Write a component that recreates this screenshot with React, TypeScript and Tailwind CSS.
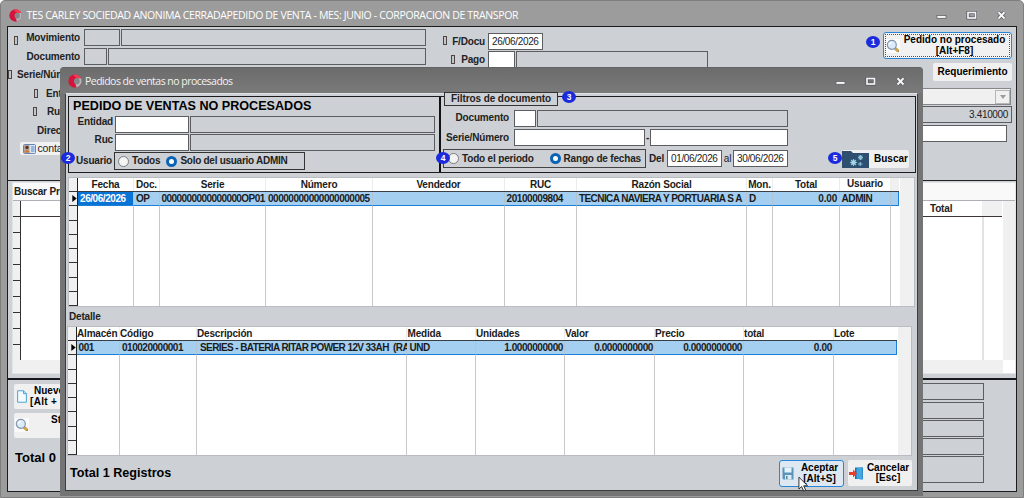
import type { ReactNode } from "react";

function Logo({ className }: { className: string }) {
  return (
    <svg viewBox="0 0 14 14" className={className}>
      <circle cx="7" cy="7" r="6.600" fill="#d6123a" />
      <path d="M7 .4a6.600 6.600 0 0 1 6 3.900L9 4.500 5 1z" fill="#ef3d55" />
      <path d="M13 4.300a6.600 6.600 0 0 1-4.500 9.100L7.500 10l3-5.700z" fill="#b4b6ba" />
      <ellipse cx="8.800" cy="7.200" rx="2.900" ry="3.100" fill="#85868a" />
    </svg>
  );
}

function WindowControls({ className }: { className: string }) {
  return (
    <svg viewBox="0 0 74 12" className={className}>
      <rect x="2" y="5.500" width="9" height="2.800" fill="#f4f4f4" stroke="#55585f" strokeWidth=".7" />
      <rect x="33" y="2.500" width="7.500" height="5.500" fill="none" stroke="#4f535c" strokeWidth="3" />
      <rect x="33" y="2.500" width="7.500" height="5.500" fill="none" stroke="#f4f4f4" strokeWidth="1.700" />
      <path d="M63.500 2.200l6 6.300M69.500 2.200l-6 6.300" stroke="#50545d" strokeWidth="3.400" />
      <path d="M63.500 2.200l6 6.300M69.500 2.200l-6 6.300" stroke="#f6f6f6" strokeWidth="2" />
    </svg>
  );
}

function Magnifier({ className }: { className: string }) {
  return (
    <svg viewBox="0 0 14 14" className={className}>
      <rect width="14" height="14" fill="#fbfbfc" />
      <path d="M8.500 8.800l3.300 3" stroke="#8a7a4a" strokeWidth="2.800" strokeLinecap="round" />
      <path d="M9.800 9.900l2 1.800" stroke="#e0aa36" strokeWidth="2" strokeLinecap="round" />
      <circle cx="5.800" cy="5.800" r="4.500" fill="#dcebfa" stroke="#8494ab" strokeWidth="1.200" />
      <path d="M3.500 5.500a2.500 2.500 0 0 1 2.400-2.200" stroke="#fff" strokeWidth="1.200" fill="none" />
    </svg>
  );
}

function Box({ className, children }: { className: string; children?: ReactNode }) {
  return <div className={`box-border h-[17px] shrink-0 border border-[#5b5d61] ${className}`}>{children}</div>;
}

function Tofu({ className }: { className: string }) {
  return <span className={`h-[9px] w-[4px] shrink-0 border border-[#50443f] bg-[#bfc6d0] ${className}`} />;
}

function Radio({ on = false, className }: { on?: boolean; className: string }) {
  return on ? (
    <span className={`size-[11px] shrink-0 rounded-full border-[3.500px] border-[#0a63b5] bg-white ${className}`} />
  ) : (
    <span className={`size-[11px] shrink-0 rounded-full border border-[#7b7d80] bg-[#f3f3f3] ${className}`} />
  );
}

function Callout({ n, className }: { n: number; className: string }) {
  return (
    <span className={`absolute flex h-[12px] w-[14px] items-center justify-center rounded-[50%] bg-[#1b2bdc] text-[8.500px] leading-none font-bold text-white ${className}`}>
      {n}
    </span>
  );
}

type Column = {
  title: string;
  value: string;
  width: string;
  head: string;
  cell: string;
};

const orderColumns: Column[] = [
  { title: "Fecha", value: "26/06/2026", width: "w-[56px]", head: "justify-center", cell: "pl-[2px] tracking-[-0.430px] bg-[#0a74d6] text-white" },
  { title: "Doc.", value: "OP", width: "w-[26px]", head: "justify-center", cell: "pl-[2px] tracking-[-0.430px] bg-[#a4cff0]" },
  { title: "Serie", value: "0000000000000000OP01", width: "w-[106px]", head: "justify-center", cell: "pl-[1.500px] tracking-[-0.570px] bg-[#a4cff0]" },
  { title: "Número", value: "00000000000000000005", width: "w-[107px]", head: "justify-center", cell: "pl-[2px] tracking-[-0.480px] bg-[#a4cff0]" },
  { title: "Vendedor", value: "", width: "w-[132px]", head: "justify-center", cell: "bg-[#a4cff0]" },
  { title: "RUC", value: "20100009804", width: "w-[72px]", head: "justify-center", cell: "pl-[1.500px] tracking-[-0.430px] bg-[#a4cff0]" },
  { title: "Razón Social", value: "TECNICA NAVIERA Y PORTUARIA S A", width: "w-[170px]", head: "justify-center", cell: "pl-[2px] tracking-[-0.580px] word-spacing-[1px] bg-[#a4cff0]" },
  { title: "Mon.", value: "D", width: "w-[26px]", head: "justify-center", cell: "pl-[2px] bg-[#a4cff0]" },
  { title: "Total", value: "0.00", width: "w-[67px]", head: "justify-center", cell: "justify-end pr-[2px] tracking-[-0.200px] bg-[#a4cff0]" },
  { title: "Usuario", value: "ADMIN", width: "w-[51px]", head: "justify-center pb-[2px]", cell: "pl-[1.500px] tracking-[-0.400px] bg-[#a4cff0]" },
  { title: "", value: "", width: "w-[8px]", head: "bg-[#f0f0f0]", cell: "border-r border-r-[#1b7fd8] bg-[#a4cff0]" },
];

const detailColumns: Column[] = [
  { title: "Almacén", value: "001", width: "w-[43px]", head: "", cell: "pl-[1.500px] tracking-[-0.430px] bg-[#a4cff0]" },
  { title: "Código", value: "010020000001", width: "w-[77px]", head: "", cell: "pl-[2px] tracking-[-0.480px] bg-[#a4cff0]" },
  { title: "Descripción", value: "SERIES - BATERIA RITAR POWER 12V 33AH  (RA", width: "w-[210px]", head: "", cell: "pl-[3px] tracking-[-0.600px] bg-[#a4cff0]" },
  { title: "Medida", value: "UND", width: "w-[69px]", head: "pl-[0.500px]", cell: "pl-[2.500px] tracking-[-0.500px] bg-[#a4cff0]" },
  { title: "Unidades", value: "1.0000000000", width: "w-[89px]", head: "", cell: "justify-end pr-[1px] tracking-[-0.430px] bg-[#a4cff0]" },
  { title: "Valor", value: "0.0000000000", width: "w-[90px]", head: "", cell: "justify-end pr-[1px] tracking-[-0.430px] bg-[#a4cff0]" },
  { title: "Precio", value: "0.0000000000", width: "w-[89px]", head: "", cell: "justify-end pr-[1px] tracking-[-0.430px] bg-[#a4cff0]" },
  { title: "total", value: "0.00", width: "w-[90px]", head: "", cell: "justify-end pr-[1px] tracking-[-0.300px] bg-[#a4cff0]" },
  { title: "Lote", value: "", width: "w-[63px]", head: "", cell: "border-r border-r-[#1b7fd8] bg-[#a4cff0]" },
];

function Grid({ columns, className }: { columns: Column[]; className: string }) {
  return (
    <div className={`flex shrink-0 overflow-hidden border border-[#b9bdc1] bg-white text-[10px] leading-none font-bold text-[#1b1b1b] ${className}`}>
      <div className="flex w-[9px] shrink-0 flex-col border-r border-[#222]">
        <div className="h-[14px] shrink-0 border-b border-[#333] bg-[#f0f0f0]" />
        {[0, 1, 2, 3, 4, 5, 6, 7].map((row) => (
          <div key={row} className="flex flex-1 items-center justify-end border-b border-[#333] bg-[#f0f0f0]">
            {row === 0 && (
              <svg viewBox="0 0 5 8" className="h-[7px] w-[5px]">
                <path d="M0 0l5 4-5 4z" fill="#000" />
              </svg>
            )}
          </div>
        ))}
      </div>
      {columns.map((c, i) => (
        <div key={i} className={`flex shrink-0 flex-col ${c.width}`}>
          <div className={`flex h-[13px] shrink-0 items-center tracking-[-0.180px] whitespace-pre ${c.head} ${i < columns.length - 1 ? "border-r border-r-[#ececec]" : ""}`}>{c.title}</div>
          <div className="h-px shrink-0 bg-[#3a3f45]" />
          <div className={`flex h-[14px] shrink-0 items-center border-b border-b-[#1b7fd8] whitespace-pre ${i < columns.length - 1 ? "border-r border-r-[#b4c4d0]" : ""} ${c.cell}`}>
            {c.value}
          </div>
          <div className={`flex-1 ${i < columns.length - 1 ? "border-r border-[#c9c9c9]" : ""}`} />
        </div>
      ))}
      <div className="ml-px flex-1 bg-[#f0f0f0]" />
    </div>
  );
}

function MainTop() {
  return (
    <div className="flex h-[153px] shrink-0 text-[10px] leading-none font-bold tracking-[-0.170px] text-[#222]">
      <div className="flex w-[419px] shrink-0 flex-col pt-[2px]">
        <div className="flex h-[17px] items-center">
          <Tofu className="mt-[5px] ml-[6px]" />
          <span className="w-[62px] text-right">Movimiento</span>
          <Box className="ml-[4px] w-[36px]" />
          <Box className="ml-[1px] w-[305px]" />
        </div>
        <div className="mt-[2px] flex h-[17px] items-center">
          <span className="w-[72px] text-right">Documento</span>
          <Box className="ml-[4px] w-[23px]" />
          <Box className="ml-[1px] w-[318px]" />
        </div>
        <div className="mt-[1px] flex h-[17px] items-center">
          <Tofu className="" />
          <span className="ml-[5px]">Serie/Número</span>
        </div>
        <div className="mt-[2px] flex h-[17px] items-center">
          <Tofu className="ml-[26px]" />
          <span className="ml-[8px]">Entidad</span>
        </div>
        <div className="mt-[1px] flex h-[17px] items-center">
          <Tofu className="ml-[25px]" />
          <span className="ml-[10px]">Ruc</span>
        </div>
        <div className="mt-[2px] flex h-[17px] items-center pl-[29px]">Dirección</div>
        <div className="mt-[3px] ml-[12px] flex h-[13px] w-[60px] items-center rounded-[2px] bg-[#f1f1f2] pl-[3px] font-normal">
          <svg viewBox="0 0 13 10" className="h-[10px] w-[13px]">
            <rect x=".5" y=".5" width="12" height="9" rx="1" fill="#d9e8f8" stroke="#6586b5" />
            <path d="M1 1h5.500v8H1z" fill="#b3a59b" />
            <circle cx="4" cy="3.500" r="1.700" fill="#5e3320" />
            <path d="M1.500 8.500c0-3 5-3 5 0z" fill="#d4752c" />
            <path d="M8 3h3.500M8 5h3.500M8 7h3.500" stroke="#4f83c4" />
          </svg>
          <span className="ml-[1.500px] text-[10.500px]">contacto</span>
        </div>
      </div>
      <div className="flex w-[420px] shrink-0 flex-col pt-[6px]">
        <div className="flex h-[17px] items-center">
          <Tofu className="mt-[-3px] ml-[16px]" />
          <span className="w-[38px] text-right">F/Docu</span>
          <Box className="ml-[3px] flex w-[55px] items-center bg-white pl-[3px] font-normal tracking-[-0.350px]">26/06/2026</Box>
        </div>
        <div className="mt-[1px] flex h-[17px] items-center">
          <Tofu className="ml-[24px]" />
          <span className="w-[30px] text-right">Pago</span>
          <Box className="ml-[3px] w-[27px] bg-white" />
          <Box className="ml-[1px] w-[192px]" />
        </div>
      </div>
      <div className="ml-[36px] flex w-[129px] shrink-0 flex-col items-end pt-[5px] tracking-normal">
        <div className="h-[27px] w-[129px] rounded-[3px] border border-[#2a86d4] bg-[#f1f1f1] p-px">
          <div className="flex h-full w-full items-center border border-dotted border-[#555]">
            <Magnifier className="size-[14px] shrink-0" />
            <div className="flex-1 text-center leading-[10.500px] whitespace-nowrap text-black">
              Pedido no procesado
              <br />
              [Alt+F8]
            </div>
          </div>
        </div>
        <div className="mt-[4px] flex h-[18px] w-[79px] items-center justify-center rounded-[2px] bg-[#f0f0f1] text-black">Requerimiento</div>
        <div className="mt-[7px] mr-[1px] flex h-[17px] w-[120px] items-center justify-end border border-[#85878a] bg-[#f0f0f0]">
          <div className="flex h-[14px] w-[15px] items-center justify-center border border-[#b5b5b5]">
            <svg viewBox="0 0 6 4" className="h-[4px] w-[6px]">
              <path d="M0 0h6L3 4z" fill="#9b9b9b" />
            </svg>
          </div>
        </div>
        <Box className="mt-[1px] flex w-[120px] items-center justify-end pr-[3px] font-normal tracking-[-0.350px]">3.410000</Box>
        <Box className="mt-[2px] mr-[5px] w-[120px] bg-white" />
      </div>
    </div>
  );
}

function MainGrid() {
  return (
    <div className="mt-px ml-[4px] flex h-[192px] shrink-0 flex-col border border-[#e2e4e6] bg-white text-[10px] leading-none font-bold tracking-[-0.180px] text-[#222]">
      <div className="flex h-[18px] shrink-0 items-center border-b border-[#adb0b4] bg-[#f9f9f9] pl-[1px]">Buscar Producto</div>
      <div className="flex flex-1">
        <div className="flex w-[8px] flex-col border-r border-[#333]">
          {[0, 1, 2, 3, 4, 5, 6, 7, 8].map((row) => (
            <div key={row} className="h-[16px] shrink-0 border-b border-[#333] bg-[#f0f0f0]" />
          ))}
          <div className="flex-1 bg-[#f0f0f0]" />
        </div>
        <div className="flex w-[981px] flex-col">
          <div className="flex h-[16px] shrink-0 items-center border-b border-[#3d343a]">
            <span className="ml-[909px] w-[52px]">Total</span>
            <span className="h-full flex-1 bg-[#f0f0f0]" />
          </div>
          <div className="ml-[880px] w-[83px] flex-1 border-r-2 border-[#e2e2e2]" />
        </div>
        <div className="ml-px flex-1 bg-[#f0f0f0]" />
      </div>
      <div className="flex h-[13px] shrink-0">
        <div className="w-[990px] bg-[#f0f0f0]" />
      </div>
    </div>
  );
}

function MainBottom() {
  return (
    <div className="flex flex-1 justify-between text-[10px] leading-none font-bold text-black">
      <div className="flex w-[80px] flex-col pt-[4px] pl-[6px]">
        <div className="flex h-[25px] items-center rounded-[2px] bg-[#f0f0f1]">
          <svg viewBox="0 0 11 14" className="ml-[3px] h-[15px] w-[10px] shrink-0">
            <path d="M.7.7h6.500l3.100 3.200v9.400H.7z" fill="#f3fbff" stroke="#3c9ad0" />
            <path d="M7.200.7v3.200h3.100" fill="#b9e3f7" stroke="#3c9ad0" />
          </svg>
          <div className="ml-[3px] w-[60px] leading-[10.500px] whitespace-nowrap">
            <div className="pl-[4px]">Nuevo</div>
            <div className="tracking-[0.300px]">[Alt + N]</div>
          </div>
        </div>
        <div className="mt-[4px] flex h-[25px] rounded-[2px] bg-[#f0f0f1]">
          <Magnifier className="mt-[5px] ml-[1px] size-[14px] shrink-0" />
          <span className="mt-[2px] ml-[22px]">Stock</span>
        </div>
        <div className="mt-[13px] pl-[1px] text-[13px] whitespace-nowrap">Total 0</div>
      </div>
      <div className="mr-[32px] flex w-[70px] flex-col pt-[3px]">
        <Box className="w-full" />
        <Box className="mt-[2px] w-full" />
        <Box className="mt-[1px] w-full" />
        <Box className="mt-[1px] w-full" />
        <div className="mt-[1px] h-[27px] border border-[#5b5d61]" />
      </div>
    </div>
  );
}

function Dialog() {
  return (
    <div className="absolute top-[67px] left-[60px] flex h-[429px] w-[863px] flex-col rounded-t-[4px] border-t border-[#626262] bg-[#747474]">
      <div className="flex h-[25px] shrink-0 items-center rounded-t-[4px] bg-linear-to-b from-[#6c6c6c] to-[#7a7a7a]">
        <Logo className="ml-[8px] size-[14px]" />
        <span className="mt-[2px] ml-[3px] font-['Open_Sans','Noto_Sans',sans-serif] text-[10.500px] leading-none tracking-[-0.520px] whitespace-nowrap text-[#f2f2f2]">Pedidos de ventas no procesados</span>
        <WindowControls className="mt-[3px] mr-[15px] ml-auto h-[12px] w-[74px]" />
      </div>
      <div className="mx-[5px] flex h-[398px] flex-col border border-[#3c3c3c] border-t-[#dfe2e4] bg-[#cdd0d5] pl-[2px]">
        <div className="mt-[2px] flex h-[77px] w-[848px] shrink-0 border border-[#1c1c1c] text-[10px] leading-none font-bold tracking-[-0.170px] text-[#222]">
          <div className="flex w-[372px] shrink-0 flex-col border-r-2 border-[#111] pl-[4px]">
            <div className="h-[19px] pt-[3px] text-[12.600px] tracking-normal whitespace-nowrap text-black">PEDIDO DE VENTAS NO PROCESADOS</div>
            <div className="flex h-[17px]">
              <span className="mt-px w-[40px] text-right">Entidad</span>
              <Box className="ml-[2px] w-[74px] bg-white" />
              <Box className="ml-[1px] w-[245px]" />
            </div>
            <div className="mt-[1px] flex h-[17px]">
              <span className="mt-px w-[40px] text-right">Ruc</span>
              <Box className="ml-[2px] w-[74px] bg-white" />
              <Box className="ml-[1px] w-[245px]" />
            </div>
            <div className="mt-[1px] flex h-[18px]">
              <span className="mt-[4px] w-[39px] text-right">Usuario</span>
              <div className="ml-[2px] flex w-[191px] items-center border border-[#333]">
                <Radio className="ml-[3px]" />
                <span className="ml-[3px]">Todos</span>
                <Radio on className="ml-[6px]" />
                <span className="ml-[3px] tracking-[-0.270px] whitespace-nowrap">Solo del usuario ADMIN</span>
              </div>
            </div>
          </div>
          <div className="relative flex flex-1 flex-col pt-[13px]">
            <div className="absolute top-[-5px] left-[3px] flex h-[14px] w-[114px] items-center justify-center border border-[#333] bg-[#cdd0d5] tracking-[-0.080px] whitespace-nowrap">Filtros de documento</div>
            <div className="flex h-[17px]">
              <span className="mt-[3px] w-[68px] text-right">Documento</span>
              <Box className="ml-[5px] w-[22px] bg-white" />
              <Box className="ml-[1px] w-[251px]" />
            </div>
            <div className="mt-[2px] flex h-[17px]">
              <span className="mt-[4px] w-[68px] text-right">Serie/Número</span>
              <Box className="ml-[5px] w-[131px] bg-white" />
              <span className="mt-[4px] w-[5px] text-center">-</span>
              <Box className="w-[138px] bg-white" />
            </div>
            <div className="mt-[3px] flex h-[19px] items-center">
              <div className="ml-[2px] flex h-[19px] w-[203px] items-center border border-[#444] whitespace-nowrap">
                <Radio className="ml-[4px]" />
                <span className="ml-[3px]">Todo el periodo</span>
                <Radio on className="ml-auto" />
                <span className="mr-[4px] ml-[3px]">Rango de fechas</span>
              </div>
              <span className="ml-[3px] w-[18px]">Del</span>
              <Box className="flex w-[55px] items-center bg-white pl-[3px] font-normal tracking-[-0.350px]">01/06/2026</Box>
              <span className="w-[11px] text-center font-normal">al</span>
              <Box className="flex w-[55px] items-center bg-white pl-[3px] font-normal tracking-[-0.350px]">30/06/2026</Box>
              <div className="ml-[54px] flex h-[18px] w-[67px] items-center rounded-[2px] bg-[#f0f0f1] tracking-normal text-black">
                <svg viewBox="0 0 27 18" className="h-[18px] w-[27px] shrink-0">
                  <path d="M0 1h9l2 2h16v15H0z" fill="#2e4f70" />
                  <g stroke="#8cc5dc" strokeWidth="1.100">
                    <path d="M8 12.500h7M11.500 9v7M9 10l5 5M14 10l-5 5" />
                    <path d="M16 7.500h5M18.500 5v5M16.700 5.700l3.600 3.600M20.300 5.700l-3.600 3.600" />
                    <path d="M16 14h4.500M18.200 12v4" />
                  </g>
                  <circle cx="11.500" cy="12.500" r="2.200" fill="#a6d8e8" />
                  <circle cx="18.500" cy="7.500" r="1.600" fill="#86bfd6" />
                </svg>
                <span className="ml-[5px]">Buscar</span>
              </div>
            </div>
          </div>
        </div>
        <Grid columns={orderColumns} className="mt-[4px] h-[130px] w-[847px]" />
        <div className="flex h-[19px] shrink-0 items-center pl-[1px] text-[10px] leading-none font-bold tracking-[-0.170px] text-[#222]">Detalle</div>
        <Grid columns={detailColumns} className="ml-[-1px] h-[130px] w-[845px]" />
        <div className="flex h-[35px] shrink-0 pl-[2px] text-[10px] leading-[10.500px] font-bold text-black">
          <span className="mt-[11px] w-[709px] text-[12.600px] leading-none">Total 1 Registros</span>
          <div className="mt-[4px] flex h-[27px] w-[65px] items-center rounded-[3px] border border-[#2a86d4] bg-[#dde8f3]">
            <svg viewBox="0 0 12 13" className="ml-[2px] h-[13px] w-[12px] shrink-0">
              <path d="M.5.5h11v12H1.500l-1-1z" fill="#5c93b8" />
              <path d="M2.500.5h7v5h-7z" fill="#e4f2fa" />
              <path d="M3 8h6.500v4.500H3z" fill="#dcebf4" />
              <path d="M4 9h1.500v3H4z" fill="#4d82a8" />
            </svg>
            <div className="flex-1 pl-[2px] text-center whitespace-nowrap">
              Aceptar
              <br />
              [Alt+S]
            </div>
          </div>
          <div className="mt-[4px] ml-[4px] flex h-[26px] w-[64px] items-center rounded-[2px] bg-[#f0f0f1]">
            <svg viewBox="0 0 15 15" className="ml-[1px] h-[15px] w-[15px] shrink-0">
              <path d="M6 1.500h8v11.500H6z" fill="#1f6fae" />
              <path d="M7.500 2.500l6-1.500v13l-6-1.500z" fill="#43a7e2" />
              <path d="M0 6h4V3.500l4 4-4 4V9H0z" fill="#e5402c" />
            </svg>
            <div className="flex-1 text-center whitespace-nowrap">
              Cancelar
              <br />
              [Esc]
            </div>
          </div>
        </div>
      </div>
    </div>
  );
}

export default function App() {
  return (
    <div className="h-[498px] w-[1024px] overflow-hidden bg-white font-['Liberation_Sans',Arial,sans-serif]">
      <div className="relative flex h-full w-full flex-col rounded-t-[5px] border border-[#7e7e7e] bg-[#9c9c9c] px-[6px] pb-[5px]">
        <div className="flex h-[25px] shrink-0 items-center">
          <Logo className="mt-[3px] ml-[2px] size-[13px]" />
          <span className="mt-[3px] ml-[4.500px] font-['Open_Sans','Noto_Sans',sans-serif] text-[10.500px] leading-none tracking-[-0.350px] whitespace-nowrap text-white">
            TES CARLEY SOCIEDAD ANONIMA CERRADAPEDIDO DE VENTA - MES: JUNIO - CORPORACION DE TRANSPOR
          </span>
          <WindowControls className="mt-[5px] mr-[8px] ml-auto h-[12px] w-[74px]" />
        </div>
        <div className="flex flex-1 flex-col border border-[#1c1c1c] bg-[#cdd0d5]">
          <MainTop />
          <div className="h-px shrink-0 bg-[#222]" />
          <MainGrid />
          <div className="mt-[4px] h-[2px] shrink-0 bg-[#16181c]" />
          <MainBottom />
        </div>
      </div>
      <Dialog />
      <Callout n={1} className="top-[36px] left-[866px]" />
      <Callout n={2} className="top-[152px] left-[61px]" />
      <Callout n={3} className="top-[91px] left-[562px]" />
      <Callout n={4} className="top-[152px] left-[436px]" />
      <Callout n={5} className="top-[152px] left-[828px]" />
      <svg viewBox="0 0 12 18" className="absolute top-[476px] left-[798px] h-[17px] w-[11px]">
        <path d="M1 1v13l3-2.800 2.200 5 2.200-1-2.200-4.800h4.300z" fill="#fff" stroke="#222" strokeWidth="1" />
      </svg>
    </div>
  );
}
